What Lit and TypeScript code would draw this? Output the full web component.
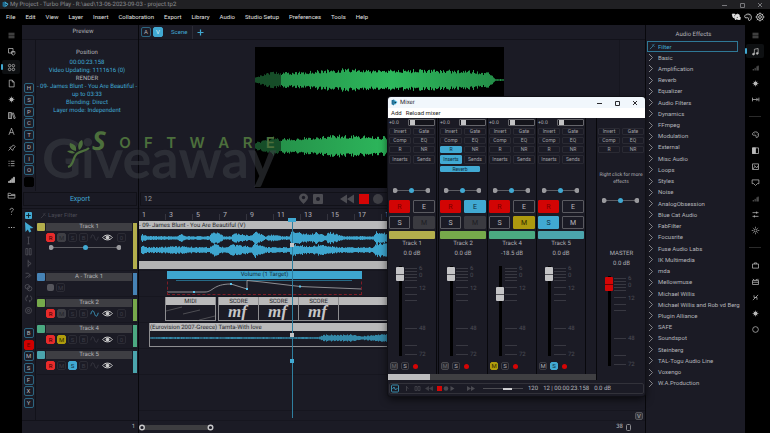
import { LitElement, html, svg, css, nothing } from "lit";
import { customElement } from "lit/decorators.js";
import { classMap } from "lit/directives/class-map.js";
import { styleMap } from "lit/directives/style-map.js";

const MENUS = ["File", "Edit", "View", "Layer", "Insert", "Collaboration", "Export", "Library", "Audio", "Studio Setup", "Preferences", "Tools", "Help"];

const EFFECTS = [
  "Basic", "Amplification", "Reverb", "Equalizer", "Audio Filters", "Dynamics", "FFmpeg", "Modulation", "External",
  "Misc Audio", "Loops", "Styles", "Noise", "AnalogObsession", "Blue Cat Audio", "FabFilter", "Focusrite",
  "Fuse Audio Labs", "IK Multimedia", "mda", "Mellowmuse", "Michael Willis", "Michael Willis and Rob vd Berg",
  "Plugin Alliance", "SAFE", "Soundspot", "Steinberg", "TAL-Togu Audio Line", "Voxengo", "W.A.Production",
];

/* Icon bodies, drawn on a 12 by 12 grid with a stroke of the current colour. */
const ICONS: Record<string, unknown> = {
  menu: svg`<path d="M2 3h8M2 5h8M2 7h8M2 9h8" opacity=".6"/>`,
  copy: svg`<path d="M2 2h6v6H2zM6 6h4.500v3L8.500 11 6 9z"/>`,
  grid: svg`<circle cx="3.500" cy="3.500" r="1.700"/><circle cx="8.500" cy="3.500" r="1.700"/><circle cx="3.500" cy="8.500" r="1.700"/><circle cx="8.500" cy="8.500" r="1.700"/>`,
  file: svg`<path d="M3 1.500h4l2.500 2.500v6.500H3zM7 1.500V4h2.500"/>`,
  burst: svg`<circle cx="6" cy="6" r="2.600" fill="currentColor" stroke="none"/><path d="M6 2v8M2 6h8M3.500 3.500l5 5M8.500 3.500l-5 5" stroke-width=".7"/>`,
  books: svg`<path d="M2 2v8.500M4 2v8.500M6 2v8.500M2 10h4M2 2h4M7 3l1.500-.5 2.500 7-1.500.800z"/>`,
  letter: svg`<path d="M2.500 10.500 6 1.500l3.500 9M3.800 7.500h4.400"/>`,
  pin: svg`<path d="M2 10l2.500-2.500M3.500 6l3-1 2-2.500L11 5 8.500 7.500 7.500 10z"/>`,
  list: svg`<path d="M2 3h1.500M5 3h5M2 6h1.500M5 6h5M2 9h1.500M5 9h5"/>`,
  signal: svg`<path d="M2 10V8.500h1.500V10zM4.200 10V7h1.300v3zM6.300 10V5h1.300v5zM8.500 10V3h1.500v7z" fill="currentColor"/>`,
  bars: svg`<path d="M3 10V8M5.500 10V6.500M8 10V4.500M9.500 10V3.500" opacity=".7"/>`,
  folder: svg`<path d="M1.500 3h3l1 1.500h5V9.500h-9zM1.500 6h9"/>`,
  help: svg`<path d="M4 4c0-3 4.500-3 4.500-.5C8.500 5 6 5 6 7.500M6 9.500v1"/>`,
  dots: svg`<path d="M2 6h1.500M5.300 6h1.500M8.600 6h1.500" stroke-width="1.600"/>`,
  music: svg`<path d="M4.500 9.500V3l5-1v6.500"/><circle cx="3.300" cy="9.500" r="1.200" fill="currentColor"/><circle cx="8.300" cy="8.500" r="1.200" fill="currentColor"/>`,
  reach: svg`<path d="M2 3.500v5M2 6h7M7 3.800 9.200 6 7 8.200M10.500 3.500v5"/>`,
  palette: svg`<path d="M2 5.500C2 2 9.500 1 10 5.500c.300 4-2 5-3 4.500-1-.7.300-2-.7-3C5 6.500 2 8 2 5.500z"/><path d="M4.500 4.500h.5M7 3.800h.5M8 6h.5"/>`,
  contrast: svg`<path d="M2 2.500h8v7.500H2z"/><path d="M2 2.500h4v7.500H2z" fill="currentColor"/>`,
  image: svg`<path d="M2 2.500h8v7.500H2zM2.500 9.500l3-4 2 2.500 2-3M4 4.500h1"/>`,
  monitor: svg`<path d="M1.500 2.500h9v5h-2L6 10 3.500 7.500h-2z"/>`,
  sliders: svg`<path d="M2 3.500h8M2 8.500h8M7.500 2v3M4.500 7v3"/>`,
  sun: svg`<circle cx="6" cy="6" r="2"/><path d="M6 1v1.500M6 9.500V11M1 6h1.500M9.500 6H11M2.500 2.500l1 1M8.500 8.500l1 1M9.500 2.500l-1 1M3.500 8.500l-1 1"/>`,
  gear: svg`<circle cx="6" cy="6" r="4"/><circle cx="6" cy="6" r="1.700"/><path d="M6 .7V2M6 10v1.300M.7 6H2M10 6h1.300M2.200 2.200l1 1M8.800 8.800l1 1M9.800 2.200l-1 1M3.200 8.800l-1 1"/>`,
  bag: svg`<path d="M2 4h8v5.500H2zM4.500 4V2.500h3V4"/>`,
  film: svg`<path d="M2 4.500h8V10H2zM2 7h8M2.500 2.500l2 2M6 4.500l2-2M10 2.500l-2 2"/>`,
  link: svg`<path d="M2.500 9.500 6 6l3.500-3.500M4 3v3h4v3"/>`,
  ring: svg`<circle cx="6" cy="6" r="3.800"/>`,
  puzzle: svg`<path d="M1.500 2.500h3l1 1.500 2-1.500 2.500 1-.5 2 1.500.5v3h-3l-1-1-1.500 1.500-1-2.500-2-.5z" fill="currentColor"/><path d="M4 4.500h1M7 6.500h1" stroke="#000"/>`,
  wand: svg`<path d="M1.500 10.500 7 5M5.500 2.500l4 4M9.500 1.500l-3 3"/>`,
  beam: svg`<path d="M4.500 1.500h3M6 1.500v9M4.500 10.500h3"/>`,
  brackets: svg`<path d="M5 2H2.500v8.500H5zM7 2h2.500v8.500H7z"/>`,
  split: svg`<path d="M5.500 1v10M5.500 3l4 3-4 3"/>`,
  join: svg`<path d="M2 9l6-4M2 3h4l3 3-3 3"/>`,
  loops: svg`<circle cx="4.500" cy="5" r="3"/><circle cx="7.500" cy="7.500" r="3"/>`,
  turn: svg`<path d="M4 9.500C1.500 8 2 4 4.500 3M8 2.500c3 1 3 5.500.5 7M4.500 1.500v3M7.500 8v3"/>`,
  target: svg`<circle cx="6" cy="6" r="4"/><circle cx="6" cy="6" r="1.500"/>`,
  sine: svg`<path d="M1 7C2.500 1 4.500 1 6 6s3.500 5 5-1" stroke-width="1.100"/>`,
  plus: svg`<path d="M6 2v8M2 6h8" stroke-width="1.600"/>`,
};

const LEFT_RAIL = ["menu", "copy", "grid", "file", "burst", "books", "letter", "pin", "list", "signal", "folder", "help", "dots"];
const RIGHT_RAIL = ["menu", "music", "bars", "burst", "reach", "-", "palette", "contrast", "image", "monitor", "bars", "sliders", "sun", "-", "bag", "film", "link", "burst", "ring"];
const TOOLS = ["beam", "brackets", "split", "join", "loops", "turn", "target"];

interface Track {
  name: string;
  color: string;
  kind?: "main" | "automation";
  on: string;
  muted?: boolean;
  wave?: boolean;
  last: boolean;
}
const TRACKS: Track[] = [
  { name: "Track 1", color: "#b3ae4c", kind: "main", on: "R", muted: true, last: true },
  { name: "A - Track 1", color: "#4683b5", kind: "automation", on: "", last: false },
  { name: "Track 2", color: "#76a94b", on: "R", muted: true, wave: true, last: true },
  { name: "Track 4", color: "#4ba981", on: "RM", last: true },
  { name: "Track 5", color: "#4ba5ad", on: "RS", last: false },
];

interface Channel {
  name: string;
  db: string;
  level: number;
  color: string;
  e?: boolean;
  s?: boolean;
  m?: "grey" | "gold";
  fx?: string;
}
const CHANNELS: Channel[] = [
  { name: "Track 1", db: "0.0 dB", level: 99, color: "#b3ae4c", m: "grey" },
  { name: "Track 2", db: "0.0 dB", level: 99, color: "#76a94b", m: "grey", e: true, fx: "Reverb" },
  { name: "Track 4", db: "-18.5 dB", level: 73, color: "#4ba981", m: "gold" },
  { name: "Track 5", db: "0.0 dB", level: 99, color: "#4ba5ad", s: true },
];

/* Vertical bars around a centre line; env holds [x, amplitude] stops. */
function wave(from: number, to: number, cy: number, env: number[][], seed: number): string {
  let r = seed;
  let d = "";
  for (let x = from; x < to; x++) {
    r = (r * 16807) % 2147483647;
    let i = 0;
    while (i < env.length - 2 && env[i + 1][0] <= x) i++;
    const [x0, a0] = env[i];
    const [x1, a1] = env[i + 1];
    const t = Math.min(1, Math.max(0, (x - x0) / (x1 - x0)));
    const a = (a0 + (a1 - a0) * t) * (0.62 + 0.38 * (r / 2147483647));
    d += `M${x + 0.5} ${(cy - a).toFixed(1)}V${(cy + a).toFixed(1)}`;
  }
  return d;
}

const SONG_TOP = [[3, 4], [8, 2], [38, 2], [42, 4], [46, 2], [70, 2], [74, 7], [80, 6], [84, 2], [92, 2], [94, 6], [108, 3], [112, 3], [116, 7], [126, 2], [132, 4], [142, 2], [150, 2], [152, 8], [160, 6], [172, 4], [176, 7], [186, 3], [190, 7], [204, 2], [234, 2], [237, 7], [250, 5], [500, 5]];
const SONG_LOW = [[2, 5], [8, 3], [40, 4], [70, 3], [74, 7], [84, 3], [94, 6], [100, 5], [112, 4], [116, 8], [126, 3], [150, 3], [153, 7], [170, 4], [180, 6], [200, 3], [234, 3], [238, 8], [252, 6], [500, 6]];
const VOICE = [[0, 1], [100, 1], [130, 1], [168, 1], [172, 3], [178, 4], [186, 3], [200, 4], [210, 2], [222, 3], [234, 4], [450, 4]];
const STAGE = [[0, 4], [10, 6], [18, 10], [22, 8], [40, 8], [60, 10], [90, 12], [120, 10], [160, 11], [220, 10], [228, 7], [232, 9], [238, 4], [240, 1], [249, 1]];

@customElement("app-root")
export class AppRoot extends LitElement {
  static styles = css`
    *, *::before, *::after { box-sizing: border-box; }
    :host {
      display: flex;
      flex-direction: column;
      position: relative;
      height: 100vh;
      min-height: 433px;
      overflow: hidden;
      background: #000;
      color: #b4b5ba;
      font: 6px/8px Roboto, "Open Sans", sans-serif;
      text-rendering: geometricPrecision;
      --panel: #1b1b25;
      --line: #12121a;
      --blue: #41a9d2;
    }
    button, input { font: inherit; color: inherit; padding: 0; margin: 0; border: 0; background: none; border-radius: 0; outline: 0; min-width: 0; }
    button { display: flex; align-items: center; justify-content: center; white-space: nowrap; }
    svg { display: block; flex: none; }
    .ic { width: 9px; height: 9px; fill: none; stroke: currentColor; stroke-width: 1; }
    .ic.big { width: 10px; height: 10px; }
    .blue { color: var(--blue); }

    .title { display: flex; align-items: center; height: 9px; flex: none; background: #202023; color: #8b8b8f; padding: 0 6px 0 2px; gap: 1px; }
    .title .win { display: flex; gap: 10px; margin-left: auto; color: #77777b; }
    .menu { display: flex; align-items: center; height: 16px; flex: none; padding: 0 5px 0 6px; gap: 10px; color: #e2e2e2; }
    .menu .tools { display: flex; gap: 2px; margin-left: auto; }

    .main { display: grid; grid-template-columns: 22px 117px minmax(0, 1fr) 100px 25px; flex: 1; min-height: 0; }
    .rail { display: flex; flex-direction: column; align-items: center; padding-top: 2px; color: #b9b9b9; }
    .fx + .rail { padding-right: 5px; }
    .rail button { width: 18px; height: 14px; margin: 1px 0; border-radius: 2px; position: relative; }
    .rail .on { background: #0e1012; }
    .rail .on::before { content: ""; position: absolute; left: -1px; top: 4px; width: 2px; height: 6px; background: var(--blue); border-radius: 1px; }
    .rail hr { width: 12px; height: 1px; margin: 9px 0; border: 0; background: #2b2b2b; }

    .side { display: flex; flex-direction: column; background: var(--panel); border-right: 1px solid #08080c; min-height: 0; }
    .head { display: flex; align-items: center; height: 15px; flex: none; border-bottom: 1px solid var(--line); }
    .side .head { justify-content: center; padding-left: 6px; }
    .preview { display: flex; height: 151px; flex: none; }
    .keys { display: flex; flex-direction: column; justify-content: space-between; align-items: center; width: 14px; flex: none; border-right: 1px solid var(--line); }
    .preview .keys { padding: 43px 0 4px 1px; }
    .key { width: 10px; height: 10px; border: 1px solid #2c6580; border-radius: 2px; color: #b4b5ba; }
    .key.off { border-color: #000; background: #000; }
    .key.hot { border-color: #d00000; background: #d00000; color: #5e0000; }
    .info { flex: 1; padding-top: 9px; text-align: center; white-space: nowrap; }
    .info p { margin: 0; }
    .info .first { margin-bottom: 2px; }
    .bar { display: flex; align-items: center; height: 14px; margin: 1px 1px 2px; flex: none; border: 1px solid #111118; background: #1a1a24; font-size: 7px; }
    .side .bar { justify-content: center; }
    .filter { display: flex; align-items: center; height: 13px; flex: none; border-top: 1px solid var(--line); padding-left: 3px; color: #4b4b55; }
    .filter input { width: 60px; height: 8px; }
    .filter .ic { margin-left: 8px; margin-right: 1px; width: 7px; height: 7px; }
    ::placeholder { color: inherit; opacity: 1; }
    .add { width: 7px; height: 7px; background: var(--blue); color: #10202a; border-radius: 1px; }
    .filter .add .ic { margin: 0; }
    .layers { display: flex; flex: 1; min-height: 0; }
    .toolcol { display: flex; flex-direction: column; justify-content: space-between; width: 14px; flex: none; border-right: 1px solid var(--line); padding-top: 1px; }
    .toolset { display: flex; flex-direction: column; align-items: center; justify-content: space-between; height: 93px; color: #57575f; }
    .toolcol .keys { width: 13px; height: 80px; border: 0; margin-bottom: 12px; }
    .tracks { flex: 1; padding-left: 1px; }
    .track { display: grid; grid-template-columns: 8px 86px 4px; column-gap: 1px; height: 26px; padding: 2px 0; border-bottom: 1px solid #16161f; }
    .track.main-track { height: 50px; }
    .swatch { height: 8px; border-radius: 1px; }
    .strip-color { height: 22px; }
    .main-track .strip-color { height: 46px; }
    .tname { height: 8px; text-align: center; background: #3e3e43; color: #b4b4b8; }
    .tbuttons { display: flex; align-items: center; gap: 2px; height: 9px; margin-top: 2px; color: #3c3c45; }
    .tb { width: 9px; height: 9px; border: 1px solid #2b2b34; border-radius: 2px; }
    .tb.r { background: #e82b2b; border-color: #e82b2b; color: #300; }
    .tb.grey { background: #3f3f45; border-color: #3f3f45; color: #24242a; }
    .tb.gold { background: #b09c0c; border-color: #b09c0c; color: #2e2800; }
    .tb.cyan { background: var(--blue); border-color: var(--blue); color: #0d2a38; }
    .tb.blank { width: 7px; height: 7px; background: #55555c; border: 0; margin-left: 1px; }
    .eye { margin: 0 2px 0 1px; color: #d0d0d0; }
    .pan { appearance: none; display: block; width: 37px; height: 5px;
      background:
        radial-gradient(circle at 2px 50%, #9a9a9e 2px, transparent 3px),
        radial-gradient(circle at calc(100% - 2px) 50%, #9a9a9e 2px, transparent 3px),
        linear-gradient(#5c5c62, #5c5c62) 0 50% / 100% 1px no-repeat; }
    .pan::-webkit-slider-thumb { appearance: none; width: 5px; height: 5px; border-radius: 50%; background: var(--blue); }
    .track .pan { width: 72px; margin: 3px 0 0 3px; }
    .foot { display: flex; align-items: center; height: 13px; flex: none; }
    .side .foot { justify-content: flex-end; padding-right: 3px; border-top: 1px solid var(--line); }

    .center { display: flex; flex-direction: column; background: var(--panel); min-width: 0; overflow: hidden; }
    .center .head { padding-left: 2px; }
    .center .head .key { margin-right: 2px; }
    .key.fill { background: var(--blue); border-color: var(--blue); color: #dff2fa; }
    .tab { padding: 0 5px 0 6px; height: 13px; border-right: 1px solid #2c2c36; }
    .center .head .newtab { margin-left: 3px; color: var(--blue); }
    .stage { display: flex; justify-content: center; height: 151px; flex: none; padding-top: 7px; margin-right: 25px; border-right: 1px solid #16161f; }
    .screen { width: 249px; height: 141px; background: #000; }
    .transport { padding-left: 3px; color: #9a9a9e; }
    .transport input { width: 154px; flex: none; }
    .transport svg { margin-right: 4px; }
    .arrange { display: flex; flex-direction: column; flex: 1; position: relative; min-height: 0; }
    .ruler { display: flex; height: 13px; flex: none; border-top: 1px solid var(--line); font-size: 7px; line-height: 12px; padding-left: 3px; }
    .ruler span { width: 27px; flex: none; position: relative; }
    .ruler span::after { content: ""; position: absolute; right: 3px; top: 5px; height: 6px; width: 1px; background: #34343e; }
    .lane { display: flex; height: 26px; flex: none; border-bottom: 1px solid #16161f; }
    .lane.tall { height: 50px; }
    .clip { display: flex; flex-direction: column; min-width: 0; overflow: hidden; border: 1px solid #8d8d90; border-top: 0; height: 24px; flex: none; }
    .clip b { font-weight: 400; height: 8px; line-height: 9px; flex: none; background: #b9b9ba; color: #26262a; white-space: nowrap; }
    .clip.wide { flex: 1; }
    .clip.full { border: 0; height: 48px; }
    .clip.full::after { content: ""; height: 8px; flex: none; background: #b4b4b5; }
    .clip.audio { margin-left: 10px; }
    .clip.midi { width: 51px; margin: 0 2px 0 26px; text-align: center; }
    .clip.score { width: 40px; text-align: center; border-left-width: 1px; border-right: 0; }
    .clip.tail { border-right: 0; }
    .mf { font: italic bold 17px/13px "Liberation Serif", serif; color: #c6c6c8; height: 15px; padding-right: 2px; }
    .auto { margin-left: 28px; width: 195px; height: 24px; outline: 1px dashed #7e1c26; outline-offset: -1px; display: flex; flex-direction: column; flex: none; }
    .auto b { font-weight: 400; height: 8px; text-align: center; background: #3ea6cf; color: #14303e; position: relative; }
    .playhead { position: absolute; left: 149px; top: 10px; pointer-events: none; }
    .under { display: flex; justify-content: flex-end; align-items: center; height: 10px; flex: none; border-top: 1px solid #16161f; padding-right: 2px; }
    .under .key { width: 8px; height: 8px; background: #34343a; border-color: #55555b; }
    .center .foot { border-top: 1px solid #16161f; padding-right: 14px; gap: 3px; }
    .zoomer { margin-right: auto; margin-left: -2px; }

    .fx { background: var(--panel); padding: 4px 3px 0 1px; border-left: 1px solid #08080c; }
    .fx h2 { font: inherit; margin: 0 0 2px; height: 10px; line-height: 11px; text-align: center; padding-right: 2px; }
    .search { display: flex; align-items: center; width: 91px; height: 11px; border: 1px solid #2f7896; color: var(--blue); padding-left: 1px; }
    .search input { width: 70px; margin-left: 2px; }
    .fx ul { display: grid; grid-auto-rows: 1fr; height: 337px; list-style: none; margin: 0; padding: 0; }
    .fx li button { height: 100%; gap: 4px; padding-left: 1px; }
    .fx .ic { width: 6px; height: 9px; color: #88888d; }
    .fx .search .ic { color: var(--blue); width: 7px; }

    .brand { position: absolute; left: 42px; top: 130px; width: 233px; pointer-events: none; }
    .brand .top { display: flex; justify-content: space-between; align-items: flex-end; height: 22px; padding-left: 50px; color: #4c6f3c; font: 600 15px/18px Inter, sans-serif; }
    .brand .top .first { font: italic 700 26px/24px "Open Sans", sans-serif; }
    .brand .leaf { position: absolute; left: 24px; top: 8px; color: #4c6f3c; }
    .brand .base { margin-top: -23px; color: rgb(62 66 72 / 50%); font: 700 54px/58px Lato, sans-serif; }

    .mixer { position: absolute; left: 388px; top: 97px; width: 257px; background: var(--panel); border-radius: 3px; overflow: hidden; box-shadow: 0 0 0 1px #101016, 0 3px 9px rgb(0 0 0 / 70%); color: #b0b0b5; }
    .mtitle { display: flex; align-items: center; height: 11px; background: #f1f7fc; color: #2b2b2f; padding: 0 6px 0 3px; gap: 2px; }
    .mtitle .win { display: flex; gap: 10px; margin-left: auto; }
    .mmenu { display: flex; align-items: center; height: 10px; background: #fff; color: #1d1d20; padding-left: 3px; gap: 4px; }
    .mbody { display: flex; }
    .bank { width: 209px; flex: none; border-right: 1px solid #08080c; }
    .strips { display: flex; }
    .channel { width: 49px; flex: none; padding: 1px 1px 4px; border-right: 1px solid #08080c; }
    .channel:first-child { width: 51px; border-right: 3px double #08080c; }
    .channel.master { border-right: 0; width: 48px; padding-right: 0; }
    .gain { display: flex; justify-content: space-between; height: 7px; line-height: 7px; }
    .gain input { appearance: none; width: 27px; height: 7px; border: 1px solid #66666b; border-radius: 1px; background: #14141b; }
    .gain input::-webkit-slider-thumb { appearance: none; width: 5px; height: 5px; background: #c3c3c5; }
    .gain span { font-size: 5px; line-height: 8px; }
    .chips { display: grid; grid-template-columns: 22px 22px; grid-auto-rows: 7px; gap: 2px; margin-top: 2px; }
    .chip { border: 1px solid #2a2a33; border-radius: 1px; color: #a2a2a7; font-size: 5px; line-height: 5px; }
    .chip.t { height: 9px; }
    .chip.lit { background: var(--blue); border-color: var(--blue); color: #0e2c3a; }
    .chip.slot { width: 40px; height: 6px; }
    .slots { height: 22px; margin-top: 4px; }
    .channel .pan { margin-left: 4px; }
    .pads { display: grid; grid-template-columns: 21px 22px; grid-auto-rows: 13px; column-gap: 3px; row-gap: 3px; margin: 7px 0 2px; }
    .pad { border: 1px solid #5a5a60; border-radius: 1px; font-size: 7px; color: #b9b9bd; }
    .pad.red { background: #d20404; border-color: #d20404; color: #7a0000; }
    .pad.grey { background: #3a3a40; border-color: #3a3a40; color: #1d1d23; }
    .pad.gold { background: #ad990f; border-color: #ad990f; color: #2e2800; }
    .pad.cyan { background: var(--blue); border-color: var(--blue); color: #0e2c3a; }
    .ribbon { height: 8px; border-radius: 1px; }
    .label { text-align: center; line-height: 10px; }
    .fade { display: flex; gap: 1px; height: 90px; margin: 7px 0 6px; padding-left: 7px; }
    .fader { appearance: none; writing-mode: vertical-lr; direction: rtl; width: 8px; height: 90px; background: linear-gradient(#000, #000) 50% 0 / 3px 100% no-repeat; }
    .fader::-webkit-slider-thumb { appearance: none; width: 8px; height: 14px; border-radius: 1px; background: linear-gradient(#c4c4c6 7px, #55555a 7px, #55555a 8px, #c4c4c6 8px); }
    .master .fader::-webkit-slider-thumb { background: linear-gradient(#d40505 7px, #6d0000 7px, #6d0000 8px, #d40505 8px); }
    .scale { fill: #4d4d55; stroke: none; overflow: visible; }
    .mini { display: flex; align-items: center; gap: 3px; padding-left: 1px; height: 8px; }
    .mini .tb { width: 8px; height: 8px; color: #b0b0b4; border-color: #3d3d44; }
    .mini .tb.grey { background: #2b2b31; color: #66666c; border-color: #4b4b50; }
    .mini .tb.gold { background: #b09c0c; color: #2e2800; border-color: #b09c0c; }
    .mini .tb.cyan { color: #0d2a38; border-color: var(--blue); }
    .rec { width: 5px; height: 5px; border-radius: 50%; background: #d40505; margin-left: 1px; }
    .hscroll { height: 6px; background: #3f3f42; }
    .hscroll div { width: 20%; height: 6px; background: #bcbcbe; }
    .hint { margin: 19px 0 12px; text-align: center; line-height: 7px; padding-right: 1px; white-space: nowrap; height: 14px; font-size: 5px; }
    .master .name { margin-top: 46px; }
    .mfoot { display: flex; align-items: center; height: 11px; margin: 3px 1px 2px; border: 1px solid #32323a; border-radius: 2px; padding: 0 1px; color: #b4b5ba; white-space: nowrap; }
    .mfoot .dim { color: #3e3e46; }
    .mfoot .seek { appearance: none; width: 40px; height: 3px; margin: 0 5px; background: linear-gradient(#4c4c52, #4c4c52) 0 50% / 100% 1px no-repeat; }
    .seek::-webkit-slider-thumb { appearance: none; width: 9px; height: 2px; background: #cfcfd1; }
    .mfoot span { margin-right: 5px; }
  `;

  private icon(name: string, extra = "") {
    return html`<svg class="ic ${extra}" viewBox="0 0 12 12" aria-hidden="true">${ICONS[name]}</svg>`;
  }

  private windowButtons() {
    return html`<div class="win">
      <button aria-label="Minimise"><svg width="8" height="8" stroke="currentColor"><path d="M2 4.500h5"/></svg></button>
      <button aria-label="Maximise"><svg width="8" height="8" stroke="currentColor" fill="none"><path d="M2.500 2.500h4v4h-4z"/></svg></button>
      <button aria-label="Close"><svg width="8" height="8" stroke="currentColor"><path d="M2 2l4 4M6 2l-4 4"/></svg></button>
    </div>`;
  }

  private logo() {
    return html`<svg width="7" height="7" viewBox="0 0 12 12" aria-hidden="true">
      <path d="M1 2l4-1v10l-4-2z" fill="#1f6f96"/><path d="M5 1l6 4-3 4-3 1z" fill="#49b4dc"/><path d="M6 4l3 2-3 2z" fill="#0b2433"/>
    </svg>`;
  }

  private rail(items: string[], active: number, label: string) {
    return html`<nav class="rail" aria-label=${label}>
      ${items.map((name, i) => name === "-" ? html`<hr />`
        : html`<button class=${classMap({ on: i === active })} aria-label=${name}>${this.icon(name)}</button>`)}
    </nav>`;
  }

  private trackHead(t: Track) {
    const auto = t.kind === "automation";
    const box = (l: string, cls: Record<string, boolean>) => html`<button class=${classMap({ tb: true, ...cls })}>${l}</button>`;
    return html`<div class=${classMap({ track: true, "main-track": t.kind === "main" })}>
      <div class="swatch" style=${styleMap({ background: t.color })}></div>
      <div>
        <div class="tname">${t.name}</div>
        <div class="tbuttons">
          ${auto
            ? html`<button class="tb blank" aria-label="Enable"></button>${box("M", {})}`
            : html`
              ${box("R", { r: true })}
              ${box("M", { grey: !!t.muted, gold: t.on.includes("M") })}
              ${box("S", { cyan: t.on.includes("S") })}
              ${box("B", {})}
              <span class=${classMap({ blue: !!t.wave })}>${this.icon("sine")}</span>
              <svg class="eye" width="11" height="7" viewBox="0 0 11 7" fill="none" stroke="currentColor"><path d="M.7 3.500C3 .3 8 .3 10.300 3.500 8 6.700 3 6.700.7 3.500z"/><circle cx="5.500" cy="3.500" r="1.500" fill="currentColor"/></svg>
              ${t.last ? box("0", {}) : nothing}`}
        </div>
        ${t.kind === "main" ? html`<input class="pan" type="range" aria-label="Pan ${t.name}" />` : nothing}
      </div>
      <div class="strip-color" style=${styleMap({ background: t.color })}></div>
    </div>`;
  }

  private chips(c?: Channel) {
    const fx = !!c?.fx;
    return html`<div class="chips">
      <button class="chip">Invert</button><button class="chip">Gate</button>
      <button class="chip">Comp</button><button class="chip">EQ</button>
      <button class=${classMap({ chip: true, lit: fx })}>R</button><button class="chip">NR</button>
      ${c ? html`<button class=${classMap({ chip: true, t: true, lit: fx })}>Inserts</button><button class="chip t">Sends</button>` : nothing}
    </div>`;
  }

  private fader(name: string, level: number) {
    const ticks = [2, 5, 8, 11, 14, 21, 28, 34, 62, 79, 88];
    const labels: [number, string][] = [[4, "6"], [11, "0"], [24, "12"], [64, "48"], [90, "72"]];
    return html`<div class="fade">
      <input class="fader" type="range" min="0" max="100" .value=${String(level)} aria-label="${name} level" />
      <svg class="scale" width="24" height="91">
        ${ticks.map((y) => svg`<rect x="0" y=${y} width="12" height="1" opacity=".6"/>`)}
        ${labels.map(([y, l]) => svg`<text x="14" y=${y}>${l}</text>`)}
      </svg>
    </div>`;
  }

  private channel(c: Channel) {
    return html`<section class="channel" aria-label=${c.name}>
      <div class="gain"><span>+0.0</span><input type="range" min="0" max="100" .value=${"3"} aria-label="${c.name} gain" /></div>
      ${this.chips(c)}
      <div class="slots">${c.fx ? html`<button class="chip slot lit">${c.fx}</button>` : nothing}</div>
      <input class="pan" type="range" aria-label="${c.name} pan" />
      <div class="pads">
        <button class="pad red">R</button>
        <button class=${classMap({ pad: true, cyan: !!c.e })}>E</button>
        <button class=${classMap({ pad: true, cyan: !!c.s })}>S</button>
        <button class=${classMap({ pad: true, grey: c.m === "grey", gold: c.m === "gold" })}>M</button>
      </div>
      <div class="ribbon" style=${styleMap({ background: c.color })}></div>
      <div class="label">${c.name}</div>
      <div class="label">${c.db}</div>
      ${this.fader(c.name, c.level)}
      <div class="mini">
        <button class=${classMap({ tb: true, grey: c.m === "grey", gold: c.m === "gold" })}>M</button>
        <button class=${classMap({ tb: true, cyan: !!c.s })}>S</button>
        <button class="rec" aria-label="Record"></button>
      </div>
    </section>`;
  }

  private mixer() {
    return html`<section class="mixer" aria-label="Mixer">
      <div class="mtitle">${this.logo()}<span>Mixer</span>${this.windowButtons()}</div>
      <div class="mmenu"><button>Add</button><button>Reload mixer</button></div>
      <div class="mbody">
        <div class="bank">
          <div class="strips">${CHANNELS.map((c) => this.channel(c))}</div>
          <div class="hscroll"><div></div></div>
        </div>
        <section class="channel master" aria-label="Master">
          <div class="gain"></div>
          ${this.chips()}
          <div class="hint">Right click for more<br />effects</div>
          <input class="pan" type="range" aria-label="Master pan" />
          <div class="label name">MASTER</div>
          <div class="label">0.0 dB</div>
          ${this.fader("Master", 99)}
        </section>
      </div>
      <div class="mfoot">
        <svg width="8" height="9" fill="none" stroke="#3b8cab"><rect x=".5" y="1" width="7" height="7" rx="1"/><path d="M1.500 5l1.500-2 1.500 3 2-2"/></svg>
        <svg class="dim" width="37" height="9" viewBox="0 0 37 9" fill="none" stroke="currentColor"><path d="M7.500 2v5M7.500 3l2 1.500M16 2.500h2v4h-2zM19 2.500h2v4h-2z"/><path d="M30 2v5l-4-2.500zM34 2v5l-4-2.500z" fill="currentColor" stroke="none"/></svg>
        <svg width="42" height="9" viewBox="0 0 42 9"><rect x="1" y="2" width="5" height="5" fill="#d40505"/><circle cx="10" cy="4.500" r="2.300" fill="#4a4a51"/><path d="M14.500 2v5l4-2.500zM31 2v5l4-2.500zM35 2v5l4-2.500z" fill="#4a4a51"/></svg>
        <input class="seek" type="range" min="0" max="100" .value=${"65"} aria-label="Tempo" />
        <span>120</span><span>12 | 00:00:23.158</span><span>0.0 dB</span>
      </div>
    </section>`;
  }

  private stage() {
    return html`<div class="stage"><svg class="screen" viewBox="0 0 249 141">
      <defs><linearGradient id="g" gradientUnits="userSpaceOnUse" x1="0" x2="249" y1="0" y2="0">
        <stop offset="0" stop-color="#238a46"/><stop offset=".55" stop-color="#2db85c"/><stop offset="1" stop-color="#238a46"/>
      </linearGradient></defs>
      ${[33, 99].map((cy, i) => svg`
        <path d=${wave(0, 26, cy, STAGE, 77 + i)} stroke="#164d28"/>
        <path d=${wave(26, 249, cy, STAGE, 991 + i)} stroke="url(#g)"/>`)}
    </svg></div>`;
  }

  private lanes() {
    return html`
      <div class="lane tall"><div class="clip full wide"><b>- 09- James Blunt - You Are Beautiful (V)</b>
        <svg width="506" height="32" stroke="#3ea6cf"><path d=${wave(2, 500, 9, SONG_TOP, 4242)}/><path d=${wave(2, 500, 21, SONG_LOW, 917)}/></svg></div></div>
      <div class="lane"><div class="auto"><b>Volume (1 Target)</b>
        <svg width="195" height="16" fill="none" stroke="#a9a9ad" stroke-width=".8"><path d="M9 1.500h176" stroke="#2b7f9f"/>
          <path d="M0 13H38C46 13 46 5 64 5L80 10V1.500L95 3 133 7.500 195 10"/><path d="M26 13h2M63 5h2M79 10h2M132 7.500h2" stroke="#5cc4ea" stroke-width="2"/></svg></div></div>
      <div class="lane">
        <div class="clip midi"><b>MIDI</b><svg width="49" height="16" stroke="#5a5a60" stroke-width=".8"><path d="M0 6l16-4M17 9l17-4M33 15l16-4"/></svg></div>
        ${[0, 1, 2].map(() => html`<div class="clip score"><b>SCORE</b><div class="mf">mf</div></div>`)}
        <div class="clip wide tail"><b></b></div>
      </div>
      <div class="lane"><div class="clip audio wide"><b>(Eurovision 2007-Greece) Tamta-With love</b>
        <svg width="490" height="14" stroke="#3488a8"><path d=${wave(0, 490, 7, VOICE, 55)}/></svg></div></div>
      <div class="lane"></div>`;
  }

  render() {
    return html`
      <header class="title">${this.logo()}<span>My Project - Turbo Play - R:\\aed\\13-06-2023-09-03 - project.tp2</span>${this.windowButtons()}</header>
      <nav class="menu" aria-label="Main menu">
        ${MENUS.map((m) => html`<button>${m}</button>`)}
        <div class="tools">${["puzzle", "palette", "gear"].map((n) => html`<button aria-label=${n}>${this.icon(n, "big")}</button>`)}</div>
      </nav>
      <main class="main">
        ${this.rail(LEFT_RAIL, 2, "Tools")}
        <aside class="side">
          <div class="head">Preview</div>
          <div class="preview">
            <div class="keys">${"HSPCTDIO".split("").map((k) => html`<button class="key">${k}</button>`)}<button class="key off" aria-label="Black"></button></div>
            <div class="info">
              <p class="first">Position</p>
              <p class="blue">00:00:23.158</p><p class="blue">Video Updating: 1111616 (0)</p>
              <p>RENDER</p>
              <p class="blue">- 09- James Blunt - You Are Beautiful -<br />up to 03:33<br />Blending: Direct<br />Layer mode: Independent</p>
            </div>
          </div>
          <button class="bar blue">Export</button>
          <div class="filter"><button class="add" aria-label="Add layer">${this.icon("plus")}</button>${this.icon("wand")}<input placeholder="Layer Filter" aria-label="Layer Filter" /></div>
          <div class="layers">
            <div class="toolcol">
              <div class="toolset">
                <svg width="10" height="11" viewBox="0 0 10 11"><path d="M1 0l8.500 6-3.700.5 1.500 3-2 1-1.500-3L1.500 10z" fill="#41a9d2"/></svg>
                ${TOOLS.map((n) => this.icon(n))}
              </div>
              <div class="keys">${"BEMSFXY".split("").map((k) => html`<button class=${classMap({ key: true, hot: k === "E" })}>${k}</button>`)}</div>
            </div>
            <div class="tracks">${TRACKS.map((t) => this.trackHead(t))}</div>
          </div>
          <div class="foot">1</div>
        </aside>
        <section class="center">
          <div class="head">
            <button class="key">A</button><button class="key fill">V</button>
            <button class="tab blue">Scene</button><button class="newtab" aria-label="New scene">${this.icon("plus")}</button>
          </div>
          ${this.stage()}
          <div class="bar transport">
            <input value="12" aria-label="Position" />
            <svg width="11" height="12" viewBox="0 0 11 12"><path d="M5.500 11C2 7.500 1 6 1 4.500a4.500 4 0 0 1 9 0C10 6 9 7.500 5.500 11z" fill="#4c4c52"/><circle cx="5.500" cy="4.500" r="1.700" fill="#1b1b25"/></svg>
            <svg width="10" height="10"><rect width="10" height="10" rx="1" fill="#4c4c52"/><circle cx="5" cy="5" r="2" fill="#1b1b25"/></svg>
            <svg width="28" height="12" viewBox="0 0 28 12"><path d="M20 1.500v9L13 6zM27 1.500v9L20 6z" fill="#4c4c52"/></svg>
            <svg width="10" height="10"><rect width="10" height="10" fill="#d40505"/></svg>
            <svg width="10" height="10"><circle cx="5" cy="5" r="5" fill="#3e3e44"/></svg>
          </div>
          <div class="arrange">
            <div class="ruler">${Array.from({ length: 19 }, (_, i) => html`<span>${i * 2 + 1}</span>`)}</div>
            ${this.lanes()}
            <svg class="playhead" width="8" height="200"><path d="M0 0h8v4H0z" fill="#41a9d2"/><path d="M4.500 4v196" stroke="#2f7f9f"/><path d="M2 25h4v4H2zM2 115h4v4H2z" fill="#c4c4c6"/><path d="M2 141h4v4H2z" fill="#41a9d2"/></svg>
          </div>
          <div class="under"><button class="key">V</button></div>
          <div class="foot">
            <svg class="zoomer" width="78" height="7" viewBox="0 0 78 7"><rect x="3" y="1" width="71" height="5" fill="#3d3d40"/><g fill="#1b1b25" stroke="#c8c8ca" stroke-width="1.400"><circle cx="5" cy="3.500" r="2.300"/><circle cx="73.500" cy="3.500" r="2.300"/></g></svg>
            <span>38</span><svg width="5" height="7" fill="none" stroke="#8d8d91"><rect x=".5" y=".5" width="4" height="6" rx="1"/></svg>
          </div>
        </section>
        <aside class="fx">
          <h2>Audio Effects</h2>
          <label class="search">${this.icon("wand")}<input placeholder="Filter" aria-label="Filter effects" /></label>
          <ul>${EFFECTS.map((e) => html`<li><button><svg class="ic" viewBox="0 0 6 9"><path d="M1 1l3.500 3.500L1 8"/></svg>${e}</button></li>`)}</ul>
        </aside>
        ${this.rail(RIGHT_RAIL, 1, "Panels")}
      </main>
      <div class="brand" aria-hidden="true">
        <svg class="leaf" width="24" height="32" viewBox="0 0 24 32" fill="none" stroke="currentColor">
          <path d="M2 29C9 27 6 18 12 15c3-2 8-2 11-5" stroke-width="2.200"/><path d="M10 13C4 12 3 8 4 5c4 1 7 3 6 8zM13 12C11 7 13 3 16 2c2 4 0 8-3 10z" fill="currentColor" stroke="none"/><path d="M9 15c-3 1-6 0-8-2 3-1 6-1 8 2z" fill="currentColor" stroke="none"/>
        </svg>
        <div class="top"><span class="first">S</span>${"OFTWARE".split("").map((l) => html`<span>${l}</span>`)}</div>
        <div class="base">Giveaway</div>
      </div>
      ${this.mixer()}
    `;
  }
}
